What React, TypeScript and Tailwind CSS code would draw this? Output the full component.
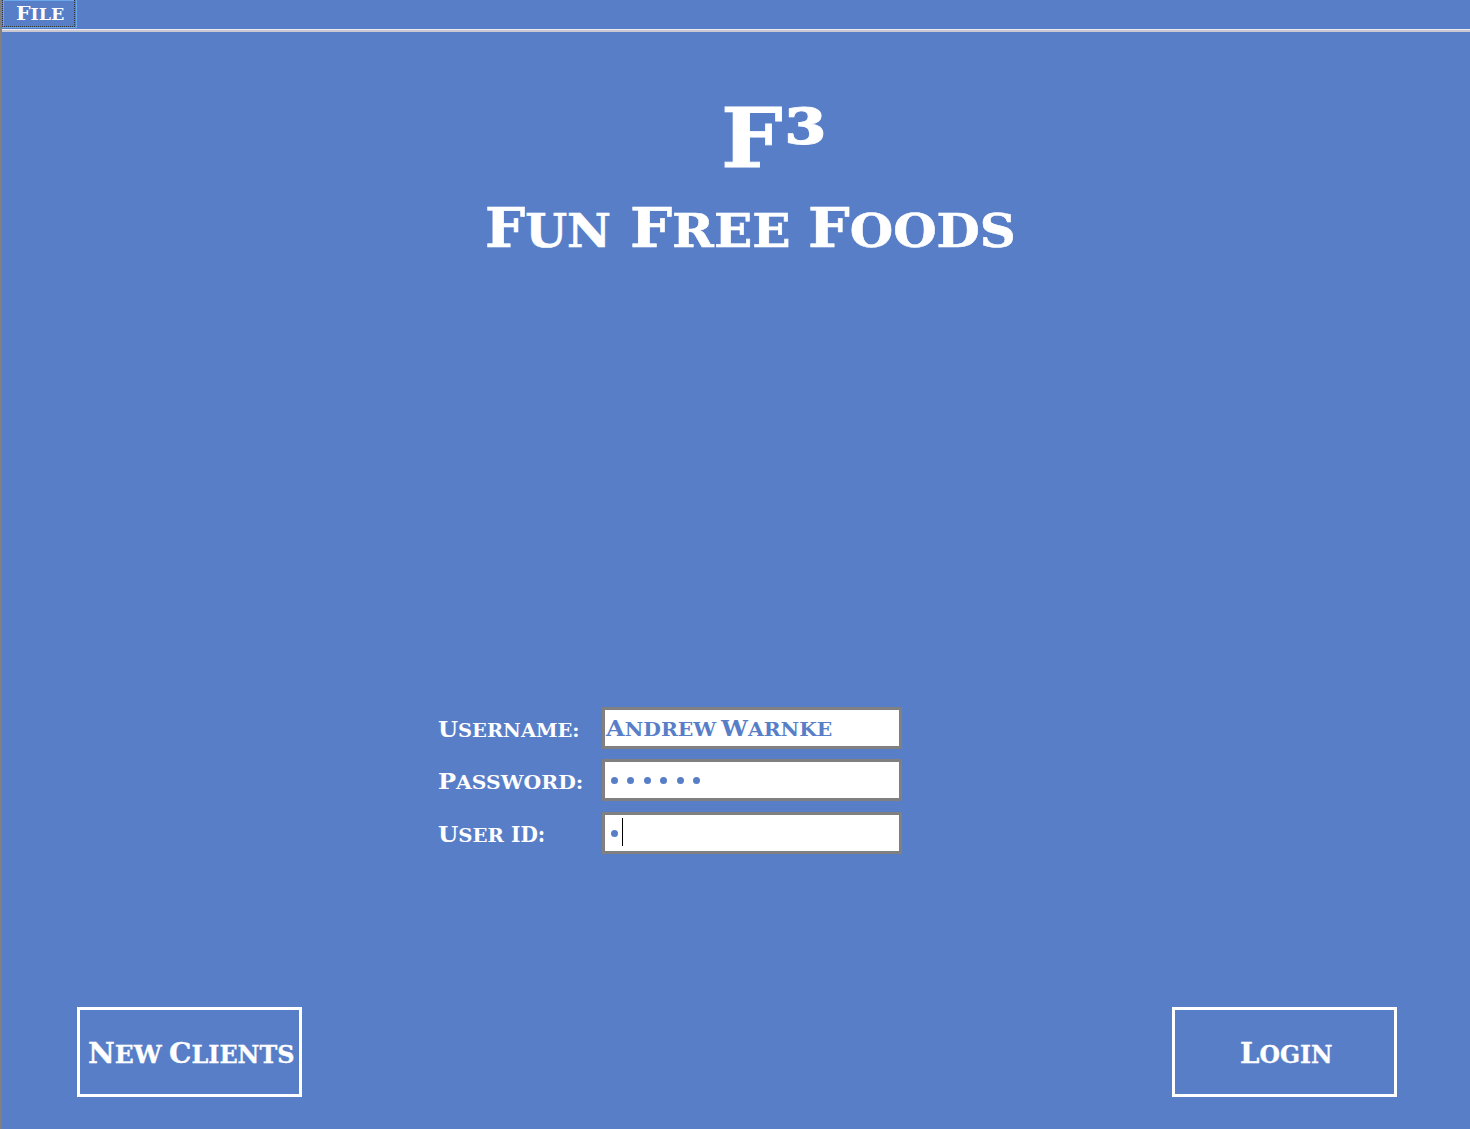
import { useLayoutEffect, useRef, useState } from "react";

type WordProps = { text: string; width: number; caps?: boolean; className?: string };

// A single engraved-style word, stretched horizontally to its set width.
function Word({ text, width, caps = false, className = "" }: WordProps) {
  const ref = useRef<HTMLSpanElement>(null);
  const [scale, setScale] = useState(1);
  useLayoutEffect(() => {
    if (ref.current) setScale(width / ref.current.offsetWidth);
  }, [width]);
  return (
    <span className={`block shrink-0 text-left ${className}`} style={{ width }}>
      <span
        ref={ref}
        className={
          caps
            ? "inline-block origin-left whitespace-nowrap text-[1.18em]"
            : "inline-block origin-left whitespace-nowrap uppercase first-letter:text-[1.18em]"
        }
        style={{ transform: `scaleX(${scale})` }}
      >
        {text}
      </span>
    </span>
  );
}

function Bullets({ count }: { count: number }) {
  return (
    <div className="flex gap-[9.4px] pl-[6px]">
      {Array.from({ length: count }, (_, i) => (
        <span key={i} className="size-[7px] rounded-full bg-[#587ec8]" />
      ))}
    </div>
  );
}

const field = "ml-px flex h-[42px] w-[300px] items-center border-3 border-[#808080] bg-white text-[#587ec8]";
const label = "flex w-[163px] gap-[7px] pt-[4px]";
const button = "flex h-[90px] w-[225px] items-center border-3 border-white pt-[4px] text-[23.5px] leading-[30px] [-webkit-text-stroke:0.3px_currentColor]";

export default function App() {
  return (
    <div className="flex h-[1129px] w-[1470px] flex-col overflow-hidden border-l-2 border-[#808080] bg-[#587ec8] font-['DejaVu_Serif',serif] font-bold text-white">
      <header className="flex h-[32px] shrink-0 flex-col justify-between">
        <div className="h-[28px] w-[75px] border-r border-b border-[#69a6ea]">
          <div className="h-[27px] w-[73px] border-r border-b border-l border-dotted border-[#333]">
            <div className="h-[26px] w-[71px] border-t border-l border-[#69a6ea] pl-[12px] text-[16px] leading-[25px]">
              <Word text="File" width={48} />
            </div>
          </div>
        </div>
        <div className="h-[3px] border-t border-[#ece9f0] bg-[#c9c7d2]" />
      </header>

      <h1 className="mt-[62px] flex h-[86px] pl-[719px] leading-[86px] [-webkit-text-stroke:0.8px_currentColor]">
        <Word text="F" width={62} className="pt-px text-[70px]" />
        <Word text="³" width={43} className="ml-px pt-[5px] text-[77px]" />
      </h1>
      <h2 className="mt-[18px] flex h-[60px] pl-[483px] text-[46.5px] leading-[60px] [-webkit-text-stroke:0.6px_currentColor]">
        <Word text="Fun" width={126} />
        <Word text="Free" width={160} className="ml-[19px]" />
        <Word text="Foods" width={208} className="ml-[18px]" />
      </h2>

      <form className="mt-[449px] flex flex-col pl-[436px] text-[18.5px] leading-[24px]">
        <div className="flex items-center">
          <label className={label}><Word text="Username:" width={142} /></label>
          <div className={field}>
            <Word text="Andrew" width={110} className="ml-[1px] pt-[2px]" />
            <Word text="Warnke" width={111} className="ml-[5px] pt-[2px]" />
          </div>
        </div>
        <div className="mt-[10px] flex items-center">
          <label className={label}><Word text="Password:" width={145} /></label>
          <div className={field}><Bullets count={6} /></div>
        </div>
        <div className="mt-[11px] flex items-center">
          <label className={label}>
            <Word text="User" width={66} />
            <Word text="ID:" caps width={34} />
          </label>
          <div className={field}>
            <Bullets count={1} />
            <span className="mb-[2px] ml-[4px] h-[28px] w-px bg-black" />
          </div>
        </div>
      </form>

      <footer className="mt-[153px] flex justify-between pr-[73px] pl-[75px]">
        <button className={`${button} gap-[7px] pl-[8px]`}>
          <Word text="New" width={74} />
          <Word text="Clients" width={125} />
        </button>
        <button className={`${button} pl-[65px]`}>
          <Word text="Login" width={93} />
        </button>
      </footer>
    </div>
  );
}
